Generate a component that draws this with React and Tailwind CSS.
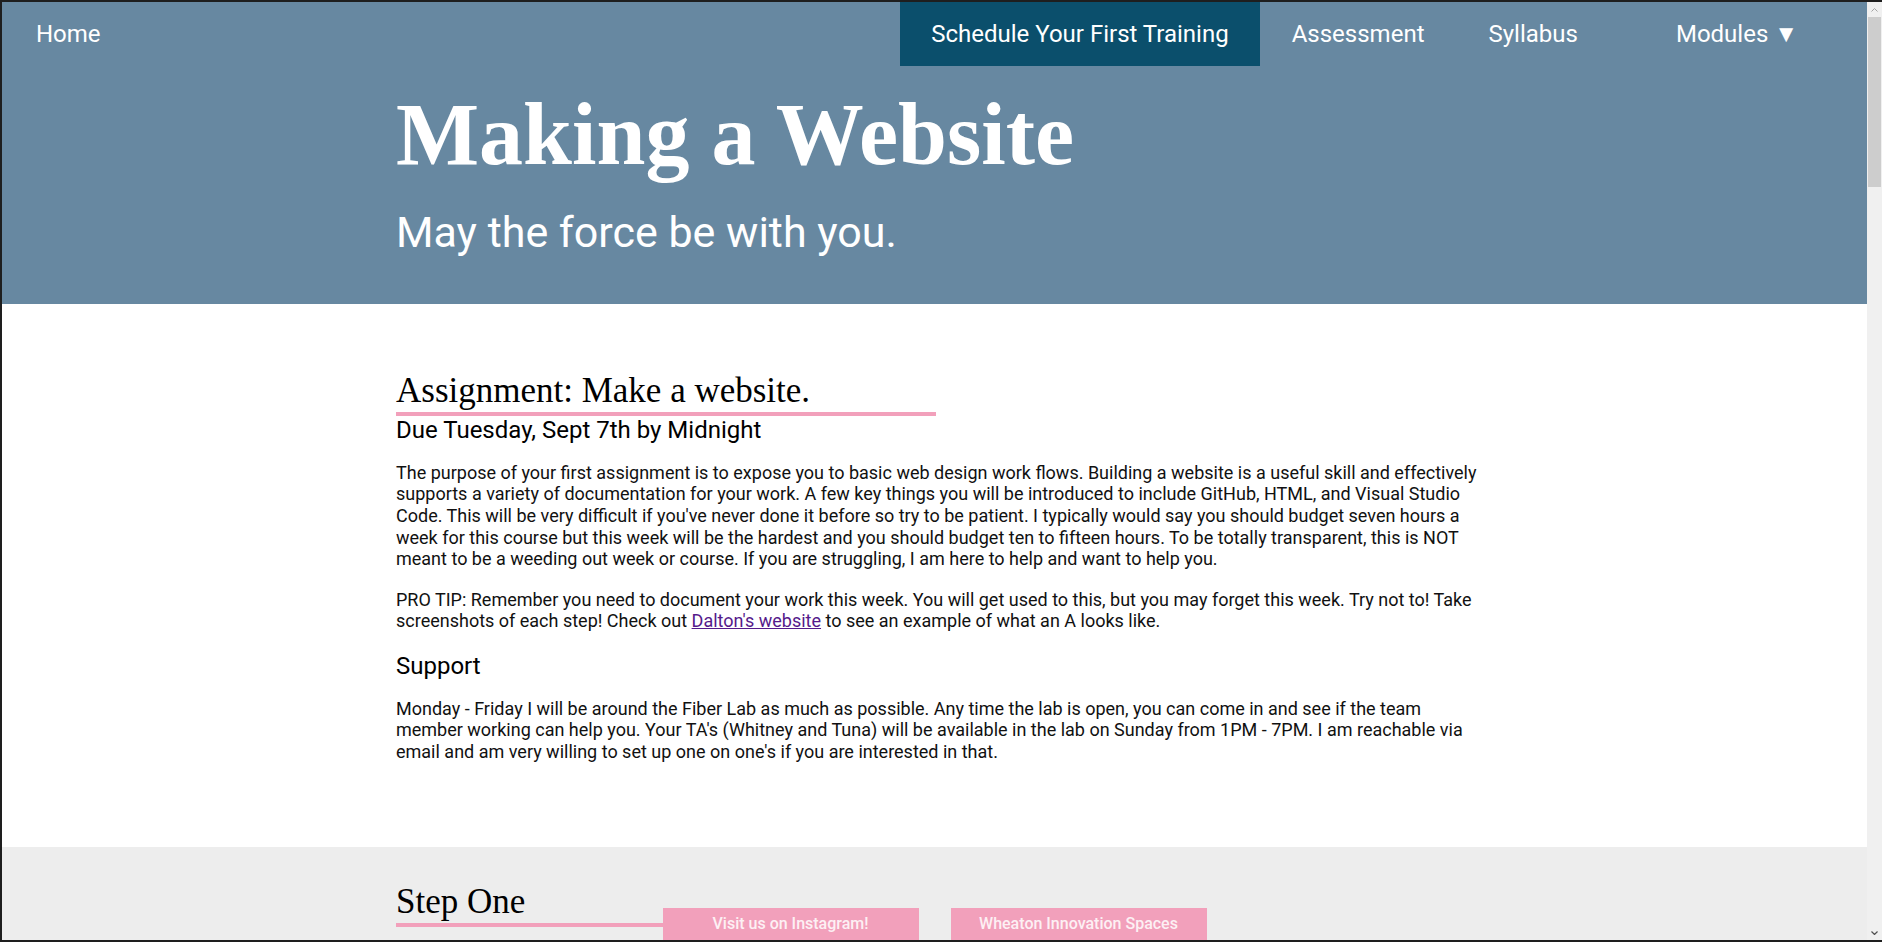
export default function App() {
  const serif = { fontFamily: '"Liberation Serif", "DejaVu Serif", serif' }

  return (
    <div
      className="w-[1882px] h-[942px] overflow-hidden bg-[#1e1e1e] pt-[2px] pl-[2px] pb-[2px] flex"
      style={{ fontFamily: 'Roboto, "Liberation Sans", sans-serif' }}
    >
      <div className="relative flex-1 h-full overflow-hidden bg-white">
        {/* header */}
        <header className="bg-[#6788a1] text-white pb-[50px]">
          <nav className="flex items-stretch justify-between h-[64px] text-[24px] leading-none">
            <a className="flex items-center pl-[34px]">Home</a>
            <ul className="flex items-stretch pr-[67px]">
              <li className="flex items-center px-[31px] bg-[#0b4f6c]">Schedule Your First Training</li>
              <li className="flex items-center px-[32px]">Assessment</li>
              <li className="flex items-center px-[32px]">Syllabus</li>
              <li className="flex items-center pl-[66px] pr-[2px]">Modules ▼</li>
            </ul>
          </nav>
          <div className="pl-[394px]">
            <h1 className="mt-[25px] text-[88px] leading-none font-bold" style={serif}>
              Making a Website
            </h1>
            <p className="mt-[32px] text-[43px] leading-none">May the force be with you.</p>
          </div>
        </header>

        {/* assignment */}
        <section className="pl-[394px] pt-[66px] h-[543px] text-[#111]">
          <div className="w-[1090px]">
            <h2 className="text-[35px] leading-[1.2] text-black" style={serif}>
              Assignment: Make a website.
            </h2>
            <div className="w-[540px] h-[4px] bg-[#f2a0bb]" />
            <h3 className="text-[24px] leading-[1.2] text-black">Due Tuesday, Sept 7th by Midnight</h3>
            <p className="mt-[17px] text-[18px] leading-[1.2]">
              The purpose of your first assignment is to expose you to basic web design work flows. Building a website is a useful skill and effectively supports a variety of documentation for your work. A few key things you will be introduced to include GitHub, HTML, and Visual Studio Code. This will be very difficult if you've never done it before so try to be patient. I typically would say you should budget seven hours a week for this course but this week will be the hardest and you should budget ten to fifteen hours. To be totally transparent, this is NOT meant to be a weeding out week or course. If you are struggling, I am here to help and want to help you.
            </p>
            <p className="mt-[19px] text-[18px] leading-[1.2]">
              PRO TIP: Remember you need to document your work this week. You will get used to this, but you may forget this week. Try not to! Take screenshots of each step! Check out <a className="text-[#551a8b] underline">Dalton's website</a> to see an example of what an A looks like.
            </p>
            <h3 className="mt-[20px] text-[24px] leading-[1.2] text-black">Support</h3>
            <p className="mt-[17px] text-[18px] leading-[1.2]">
              Monday - Friday I will be around the Fiber Lab as much as possible. Any time the lab is open, you can come in and see if the team member working can help you. Your TA's (Whitney and Tuna) will be available in the lab on Sunday from 1PM - 7PM. I am reachable via email and am very willing to set up one on one's if you are interested in that.
            </p>
          </div>
        </section>

        {/* step one */}
        <section className="bg-[#ededed] pl-[394px] pt-[34px] h-[300px]">
          <h2 className="text-[35px] leading-[1.2] text-black" style={serif}>Step One</h2>
          <div className="w-[420px] h-[4px] bg-[#f2a0bb]" />
        </section>

        {/* fixed footer links */}
        <div className="absolute bottom-0 left-0 right-0 flex justify-center gap-[32px]">
          <a className="w-[256px] h-[32px] flex items-center justify-center bg-[#f2a0bb] text-[#fdf0f4] text-[16px] font-medium">
            Visit us on Instagram!
          </a>
          <a className="w-[256px] h-[32px] flex items-center justify-center bg-[#f2a0bb] text-[#fdf0f4] text-[16px] font-medium">
            Wheaton Innovation Spaces
          </a>
        </div>
      </div>

      {/* scrollbar */}
      <div className="w-[15px] h-full bg-[#f0f0f0] flex flex-col items-center">
        <div className="h-[15px] w-full flex items-center justify-center">
          <svg width="7" height="4" viewBox="0 0 7 4"><path d="M0.5 3.5 L3.5 0.5 L6.5 3.5" fill="none" stroke="#a3a3a3" strokeWidth="1" /></svg>
        </div>
        <div className="w-[13px] h-[170px] bg-[#cdcdcd]" />
        <div className="flex-1" />
        <div className="h-[15px] w-full flex items-center justify-center">
          <svg width="7" height="4" viewBox="0 0 7 4"><path d="M0.5 0.5 L3.5 3.5 L6.5 0.5" fill="none" stroke="#505050" strokeWidth="1.2" /></svg>
        </div>
      </div>
    </div>
  )
}
